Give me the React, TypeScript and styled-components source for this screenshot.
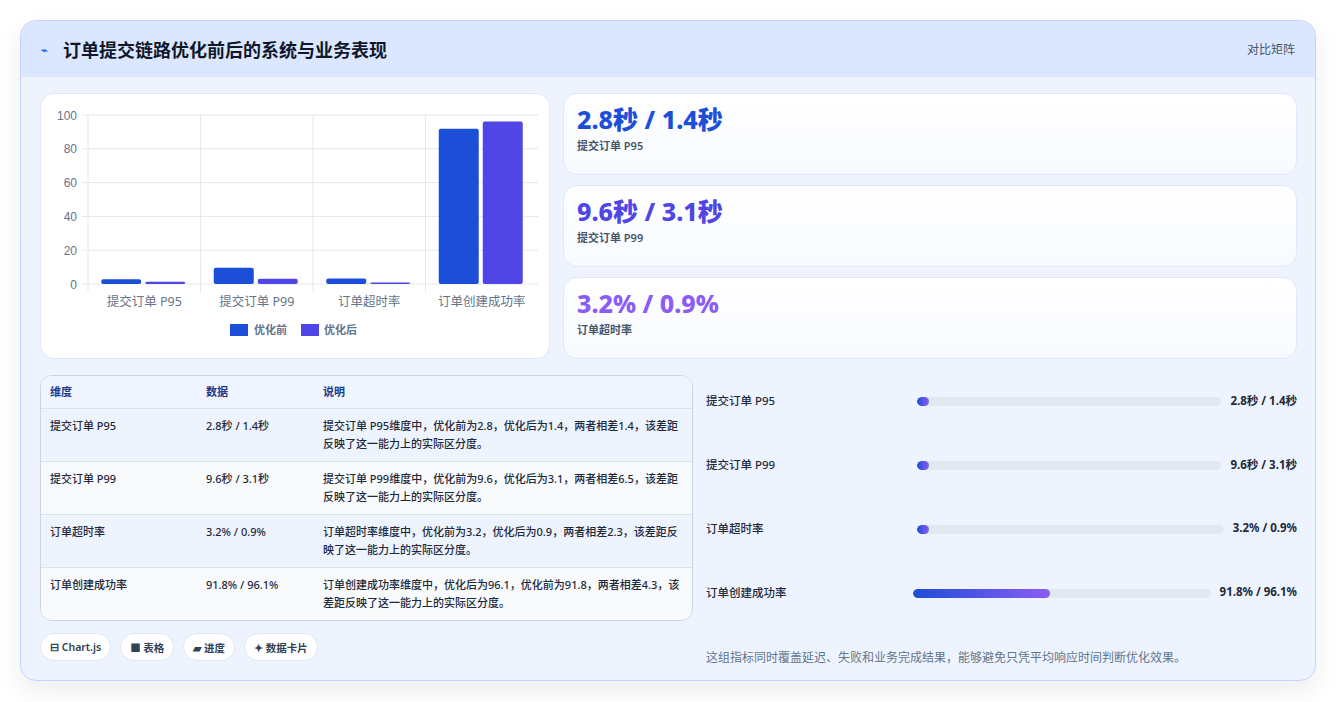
import React from "react";
import styled, { createGlobalStyle } from "styled-components";

const Global = createGlobalStyle`
  html, body { margin: 0; padding: 0; background: #fff; }
  body { font-family: "Noto Sans", "Noto Sans CJK SC", sans-serif; }
  * { box-sizing: border-box; }
`;

const Page = styled.div`
  padding: 20px;
  width: 1336px;
  height: 702px;
`;
const Card = styled.div`
  width: 1296px;
  height: 661px;
  border: 1px solid #c7d2fe;
  border-radius: 16px;
  background: linear-gradient(180deg, #eef3fe 0%, #eef4ff 100%);
  box-shadow: 0 10px 24px rgba(30, 41, 59, 0.08);
  overflow: hidden;
  display: flex;
  flex-direction: column;
`;
const Header = styled.div`
  height: 56px;
  background: #dbe7fe;
  display: flex;
  align-items: center;
  justify-content: space-between;
  padding: 0 20px;
`;
const Title = styled.h1`
  margin: 0;
  font-size: 18px;
  font-weight: 700;
  color: #0f172a;
  display: flex;
  align-items: center;
  gap: 8px;
`;
const Bolt = styled.span`
  color: #2563eb;
  font-size: 11px;
  width: 14px;
`;
const HeaderTag = styled.span`
  font-size: 12px;
  color: #475569;
`;
const Body = styled.div`
  padding: 16px 19px 0 19px;
  display: flex;
  flex-direction: column;
  gap: 16px;
`;
const TopGrid = styled.div`
  display: grid;
  grid-template-columns: 510px 734px;
  column-gap: 13px;
`;
const BottomGrid = styled.div`
  display: grid;
  grid-template-columns: 653px 591px;
  column-gap: 13px;
`;
const ChartCard = styled.div`
  background: #fff;
  border: 1px solid #e0e7ff;
  border-radius: 14px;
  height: 266px;
`;
const Stats = styled.div`
  display: flex;
  flex-direction: column;
  gap: 10px;
`;
const Stat = styled.div`
  height: 82px;
  background: linear-gradient(180deg, #ffffff, #f8faff);
  border: 1px solid #e0e7ff;
  border-radius: 14px;
  padding: 9px 13px;
`;
const StatValue = styled.div<{ $c: string }>`
  font-size: 25px;
  font-weight: 800;
  color: ${(p) => p.$c};
  line-height: 32px;
`;
const StatLabel = styled.div`
  font-size: 11px;
  color: #475569;
  margin-top: 2px;
  font-weight: 600;
`;
const Table = styled.div`
  border: 1px solid #cbd5e1;
  border-radius: 12px;
  overflow: hidden;
  background: #f8fbff;
`;
const Row = styled.div<{ $bg: string; $head?: boolean }>`
  display: grid;
  grid-template-columns: 156px 117px 1fr;
  padding: ${(p) => (p.$head ? "7px 9px" : "8px 9px 7px")};
  background: ${(p) => p.$bg};
  border-top: ${(p) => (p.$head ? "none" : "1px solid #dbe3ef")};
  font-size: 11px;
  line-height: 18px;
  color: ${(p) => (p.$head ? "#1e3a8a" : "#1e293b")};
  font-weight: ${(p) => (p.$head ? 700 : 500)};
  min-height: ${(p) => (p.$head ? "32px" : "53px")};
`;
const Left = styled.div`
  display: flex;
  flex-direction: column;
  gap: 12px;
`;
const Chips = styled.div`
  display: flex;
  gap: 9px;
`;
const Chip = styled.span`
  height: 28px;
  padding: 0 9px;
  border-radius: 14px;
  background: #fff;
  border: 1px solid #e2e8f0;
  font-size: 10.5px;
  font-weight: 600;
  color: #334155;
  display: flex;
  align-items: center;
  gap: 3px;
`;
const Progress = styled.div`
  display: flex;
  flex-direction: column;
  padding-top: 17px;
`;
const PRow = styled.div`
  height: 64px;
  display: flex;
  align-items: flex-start;
  font-size: 11.5px;
`;
const PLabel = styled.div`
  width: 211px;
  color: #1e293b;
  font-weight: 500;
`;
const Track = styled.div`
  flex: 1;
  height: 9px;
  margin-top: 5px;
  background: #e2e8f0;
  border-radius: 5px;
  overflow: hidden;
`;
const Fill = styled.div`
  height: 100%;
  min-width: 12px;
  border-radius: 5px;
  background: linear-gradient(90deg, #1d4ed8, #8b5cf6);
`;
const PValue = styled.div`
  margin-left: 9px;
  font-weight: 700;
  color: #1e293b;
  white-space: nowrap;
`;
const Note = styled.div`
  margin-top: 0px;
  font-size: 12px;
  color: #64748b;
`;

const cats = ["提交订单 P95", "提交订单 P99", "订单超时率", "订单创建成功率"];
const before = [2.8, 9.6, 3.2, 91.8];
const after = [1.4, 3.1, 0.9, 96.1];

function Chart() {
  const x0 = 47, x1 = 497, yTop = 21, yBot = 190;
  const h = yBot - yTop;
  const cw = (x1 - x0) / 4;
  return (
    <svg width="510" height="266" style={{ display: "block" }}>
      {[0, 20, 40, 60, 80, 100].map((v) => {
        const y = yBot - (v / 100) * h;
        return (
          <g key={v}>
            <line x1={x0 - 6} x2={x1} y1={y} y2={y} stroke="#e5e7eb" />
            <text x={x0 - 11} y={y + 4.5} fontSize="12" textAnchor="end" fill="#64748b" fontFamily="Liberation Sans, sans-serif">{v}</text>
          </g>
        );
      })}
      {[0, 1, 2, 3].map((i) => (
        <line key={i} x1={x0 + i * cw} x2={x0 + i * cw} y1={yTop} y2={yBot + 8} stroke="#e5e7eb" />
      ))}
      {cats.map((c, i) => {
        const cx = x0 + i * cw + cw / 2;
        const bh = (before[i] / 100) * h;
        const ah = (after[i] / 100) * h;
        return (
          <g key={c}>
            <rect x={cx - 43} y={yBot - bh} width={40} height={bh} rx={2} fill="#1d4ed8" />
            <rect x={cx + 1} y={yBot - ah} width={40} height={ah} rx={2} fill="#4f46e5" />
            <text x={cx} y={yBot + 22} fontSize="12.5" textAnchor="middle" fill="#64748b">{c}</text>
          </g>
        );
      })}
      <rect x={189} y={230} width={18} height={12} fill="#1d4ed8" />
      <text x={213} y={240} fontSize="11" fontWeight="700" fill="#64748b">优化前</text>
      <rect x={260} y={230} width={18} height={12} fill="#4f46e5" />
      <text x={283} y={240} fontSize="11" fontWeight="700" fill="#64748b">优化后</text>
    </svg>
  );
}

const rows = [
  ["提交订单 P95", "2.8秒 / 1.4秒", "提交订单 P95维度中，优化前为2.8，优化后为1.4，两者相差1.4，该差距反映了这一能力上的实际区分度。", "#eef4fe"],
  ["提交订单 P99", "9.6秒 / 3.1秒", "提交订单 P99维度中，优化前为9.6，优化后为3.1，两者相差6.5，该差距反映了这一能力上的实际区分度。", "#f8fafc"],
  ["订单超时率", "3.2% / 0.9%", "订单超时率维度中，优化前为3.2，优化后为0.9，两者相差2.3，该差距反映了这一能力上的实际区分度。", "#eef4fe"],
  ["订单创建成功率", "91.8% / 96.1%", "订单创建成功率维度中，优化后为96.1，优化前为91.8，两者相差4.3，该差距反映了这一能力上的实际区分度。", "#f8fafc"],
];

const prog: [string, string, number, number][] = [
  ["提交订单 P95", "2.8秒 / 1.4秒", 0, 0],
  ["提交订单 P99", "9.6秒 / 3.1秒", 0, 0],
  ["订单超时率", "3.2% / 0.9%", 0, 0],
  ["订单创建成功率", "91.8% / 96.1%", 46, -4],
];

export default function App() {
  return (
    <>
      <Global />
      <Page>
        <Card>
          <Header>
            <Title><Bolt>⌁</Bolt>订单提交链路优化前后的系统与业务表现</Title>
            <HeaderTag>对比矩阵</HeaderTag>
          </Header>
          <Body>
            <TopGrid>
              <ChartCard><Chart /></ChartCard>
              <Stats>
                <Stat><StatValue $c="#1d4ed8">2.8秒 / 1.4秒</StatValue><StatLabel>提交订单 P95</StatLabel></Stat>
                <Stat><StatValue $c="#4f46e5">9.6秒 / 3.1秒</StatValue><StatLabel>提交订单 P99</StatLabel></Stat>
                <Stat><StatValue $c="#8b5cf6">3.2% / 0.9%</StatValue><StatLabel>订单超时率</StatLabel></Stat>
              </Stats>
            </TopGrid>
            <BottomGrid>
              <Left>
                <Table>
                  <Row $head $bg="#eff5ff"><span>维度</span><span>数据</span><span>说明</span></Row>
                  {rows.map((r) => (
                    <Row key={r[0]} $bg={r[3]}><span>{r[0]}</span><span>{r[1]}</span><span>{r[2]}</span></Row>
                  ))}
                </Table>
                <Chips>
                  <Chip>⊟ Chart.js</Chip>
                  <Chip>■ 表格</Chip>
                  <Chip>▰ 进度</Chip>
                  <Chip>✦ 数据卡片</Chip>
                </Chips>
              </Left>
              <Progress>
                {prog.map(([l, v, p, m]) => (
                  <PRow key={l}>
                    <PLabel style={{ width: 211 + m }}>{l}</PLabel>
                    <Track><Fill style={{ width: `${p}%` }} /></Track>
                    <PValue>{v}</PValue>
                  </PRow>
                ))}
                <Note>这组指标同时覆盖延迟、失败和业务完成结果，能够避免只凭平均响应时间判断优化效果。</Note>
              </Progress>
            </BottomGrid>
          </Body>
        </Card>
      </Page>
    </>
  );
}
